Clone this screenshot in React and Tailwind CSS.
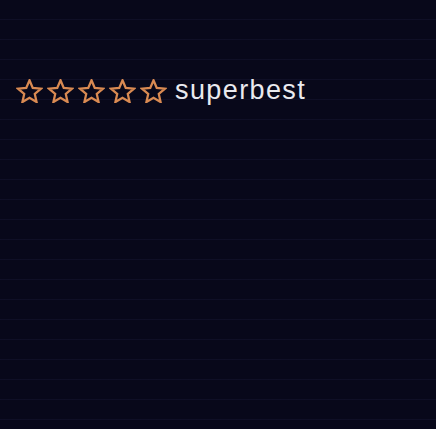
export default function App() {
  const stars = [0, 1, 2, 3, 4];

  return (
    <div className="h-[429px] w-full overflow-hidden bg-[#08081a] bg-[repeating-linear-gradient(180deg,transparent_0px,transparent_19px,rgba(60,60,110,0.14)_19px,rgba(60,60,110,0.14)_20px)] pl-[16px] pt-[77px]">
      <div className="flex items-center">
        <div className="flex items-center gap-[4px]">
          {stars.map((i) => (
            <svg
              key={i}
              className="h-[24px] w-[27px]"
              viewBox="1.3 1.3 21.4 20"
              fill="none"
              stroke="#d98a52"
              strokeWidth="1.9"
              strokeLinejoin="miter"
            >
              <polygon points="12,2.4 14.7,8.7 21.6,9.3 16.4,13.8 17.9,20.5 12,17 6.1,20.5 7.6,13.8 2.4,9.3 9.3,8.7" />
            </svg>
          ))}
        </div>
        <span className="ml-[8px] font-['Liberation_Sans',Arial,sans-serif] text-[27px] leading-none tracking-[1.4px] text-[#eaeaef]">
          superbest
        </span>
      </div>
    </div>
  );
}
